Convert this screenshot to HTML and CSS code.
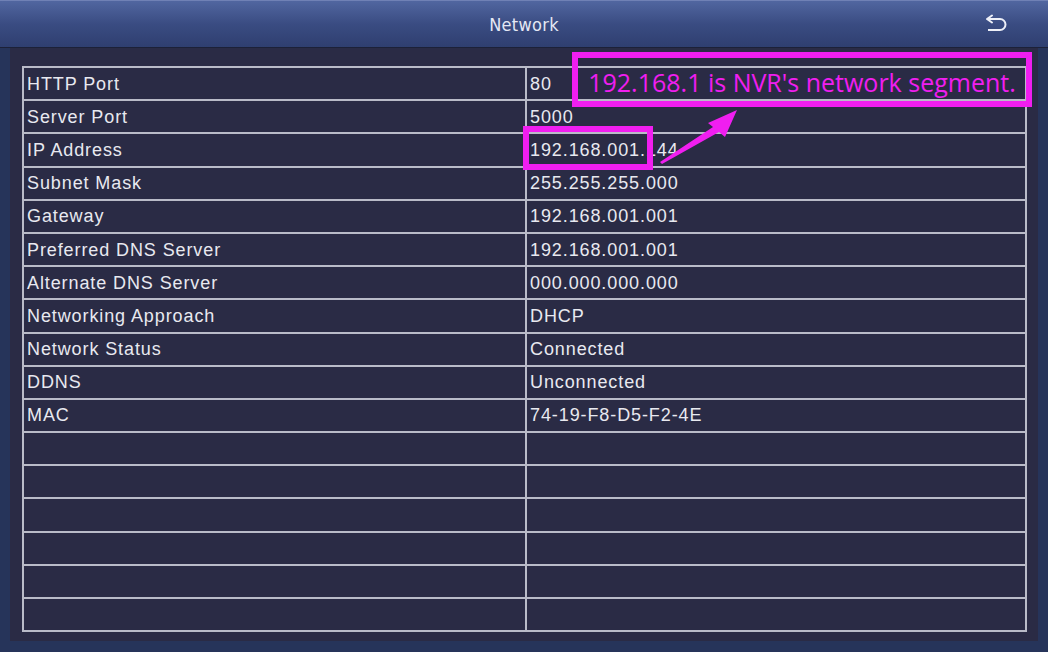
FILE: index.html
```html
<!DOCTYPE html>
<html>
<head>
<meta charset="utf-8">
<link rel="stylesheet" href="styles.css">
</head>
<body>
<header class="topbar">
  <div class="title">Network</div>
  <svg class="back" width="26" height="20" viewBox="0 0 26 20">
    <path d="M4 5 H16 A5.5 5.5 0 0 1 16 16 H4" fill="none" stroke="#eef0f8" stroke-width="2"/>
    <path d="M3 5 L8 1.5 M3 5 L8 8.5" fill="none" stroke="#eef0f8" stroke-width="2" stroke-linecap="round"/>
  </svg>
</header>
<main class="panel">
  <table class="grid">
    <tr><td>HTTP Port</td><td>80</td></tr>
    <tr><td>Server Port</td><td>5000</td></tr>
    <tr><td>IP Address</td><td>192.168.001.144</td></tr>
    <tr><td>Subnet Mask</td><td>255.255.255.000</td></tr>
    <tr><td>Gateway</td><td>192.168.001.001</td></tr>
    <tr><td>Preferred DNS Server</td><td>192.168.001.001</td></tr>
    <tr><td>Alternate DNS Server</td><td>000.000.000.000</td></tr>
    <tr><td>Networking Approach</td><td>DHCP</td></tr>
    <tr><td>Network Status</td><td>Connected</td></tr>
    <tr><td>DDNS</td><td>Unconnected</td></tr>
    <tr><td>MAC</td><td>74-19-F8-D5-F2-4E</td></tr>
    <tr><td></td><td></td></tr>
    <tr><td></td><td></td></tr>
    <tr><td></td><td></td></tr>
    <tr><td></td><td></td></tr>
    <tr><td></td><td></td></tr>
    <tr><td></td><td></td></tr>
  </table>
</main>
<div class="note">192.168.1 is NVR's network segment.</div>
<div class="mark"></div>
<svg class="arrow" width="100" height="70" viewBox="0 0 100 70">
  <polygon points="3,58 56,23 51,19 80,6 68,33 62,28 5,60" fill="#f01ef0"/>
</svg>
</body>
</html>
```
FILE: styles.css
```css
html, body {
  margin: 0;
  padding: 0;
}
body {
  width: 1048px;
  height: 652px;
  background: #26345a;
  font-family: "Liberation Sans", Arial, sans-serif;
  position: relative;
  overflow: hidden;
}
.topbar {
  height: 46px;
  background: linear-gradient(#5166a0, #3a4c82 50%, #2f3f70);
  border-top: 1px solid #7081b5;
  border-bottom: 1px solid #1c2138;
  display: flex;
  align-items: center;
  justify-content: center;
  position: relative;
}
.title {
  color: #e4e8f4;
  font-family: "DejaVu Sans Condensed", "Liberation Sans Narrow", sans-serif;
  font-size: 18px;
  letter-spacing: 0.3px;
}
.back {
  position: absolute;
  right: 38px;
  top: 13px;
}
.panel {
  margin: 0 10px;
  height: 593px;
  background: #2a2b45;
  padding: 18px 11px 0 12px;
  box-sizing: border-box;
}
.grid {
  width: 1005px;
  border-collapse: collapse;
  border: 2px solid #c3c5d0;
  table-layout: fixed;
}
.grid td {
  height: 31.2px;
  padding: 0 0 0 3px;
  border: 2px solid #b9bbc8;
  color: #e8e9f0;
  font-size: 18px;
  line-height: 20px;
  letter-spacing: 0.9px;
  white-space: nowrap;
  vertical-align: middle;
}
.grid td:first-child {
  width: 498px;
}
.note {
  position: absolute;
  left: 572px;
  top: 52px;
  width: 448px;
  height: 37px;
  padding-top: 6px;
  border: 6px solid #f01ef0;
  box-sizing: content-box;
  color: #f01ef0;
  font-family: "Open Sans", sans-serif;
  font-size: 25px;
  line-height: 37px;
  text-align: center;
}
.mark {
  position: absolute;
  left: 523px;
  top: 126px;
  width: 118px;
  height: 32px;
  border: 6px solid #f01ef0;
}
.arrow {
  position: absolute;
  left: 657px;
  top: 104px;
}
```
